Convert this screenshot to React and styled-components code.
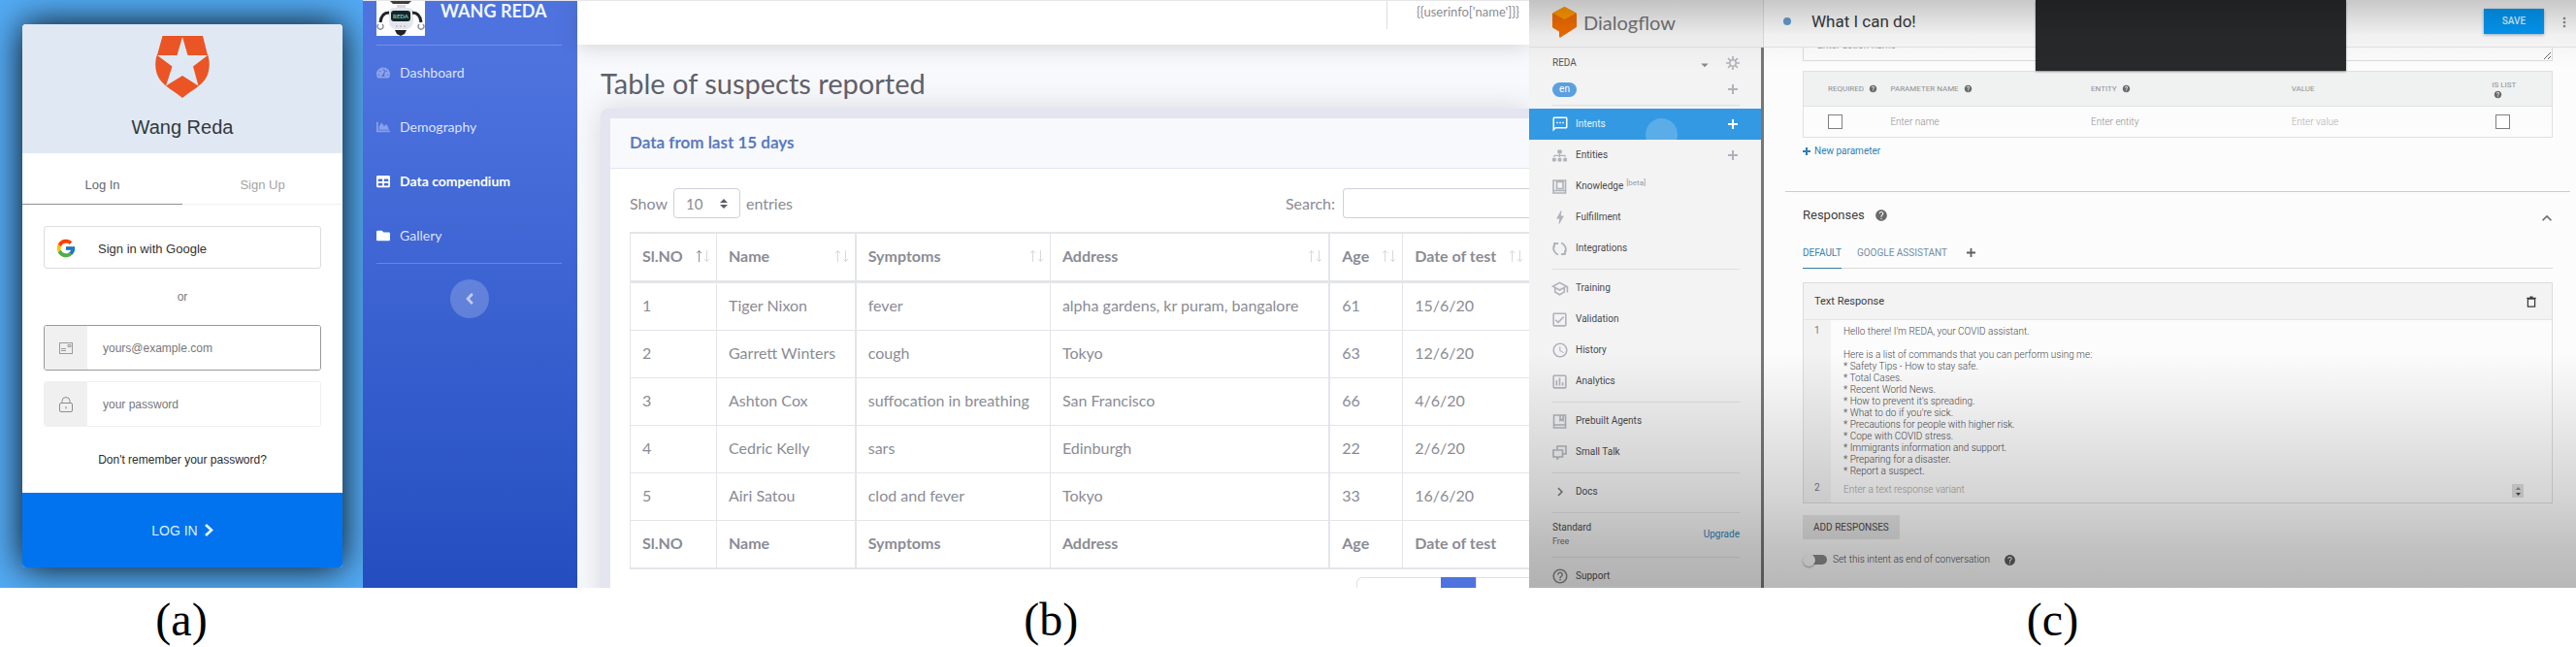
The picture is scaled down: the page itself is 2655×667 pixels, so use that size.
import React from "react";
import styled, { createGlobalStyle, css } from "styled-components";
import { FcGoogle } from "react-icons/fc";
import { FaTachometerAlt, FaChartArea, FaTable, FaFolder, FaAngleLeft, FaSitemap } from "react-icons/fa";
import {
  MdHelp, MdHelpOutline, MdBolt, MdOutlineSchool, MdOutlineCheckBox, MdOutlineAssessment,
  MdSchedule, MdArrowDropDown, MdChevronRight, MdMoreVert, MdExpandLess, MdOutlineSms,
} from "react-icons/md";

const GlobalStyle = createGlobalStyle`
  * { box-sizing: border-box; }
  body { margin: 0; background: #fff; }
  button, input, select, textarea { font: inherit; color: inherit; margin: 0; }
  button { padding: 0; border: 0; background: none; cursor: pointer; }
  a { text-decoration: none; color: inherit; }
  svg { display: block; flex: none; }
`;

const Figures = styled.main`
  display: grid;
  grid-template-columns: minmax(0, 374fr) minmax(0, 1202fr) minmax(0, 1079fr);
`;

const Caption = styled.p`
  margin: 0;
  padding-left: ${(p) => (p.$shift ? "18%" : "0")};
  height: 61px;
  text-align: center;
  font: 48px/66px "Liberation Serif", serif;
  color: #000;
`;

/* ---------- (a) login ---------- */

const LoginScreen = styled.section`
  padding: 25px 21px 21px 23px;
  background: #53abf4;
  overflow: hidden;
  font-family: "Liberation Sans", sans-serif;
`;

const LoginCard = styled.form`
  display: flex;
  flex-direction: column;
  background: #fff;
  border-radius: 4px;
  overflow: hidden;
  box-shadow: 0 0 36px rgba(0, 0, 0, 0.95);
`;

const LoginHeader = styled.header`
  display: flex;
  flex-direction: column;
  align-items: center;
  gap: 14px;
  height: 133px;
  padding-top: 12px;
  background: #e0e9f3;
`;

const LoginTitle = styled.h1`
  margin: 0;
  font-size: 20px;
  line-height: 32px;
  font-weight: 400;
  color: #33383d;
`;

const LoginTabs = styled.div`
  display: grid;
  grid-template-columns: 1fr 1fr;
  margin-bottom: 22px;
`;

const LoginTab = styled.button`
  height: 53px;
  padding-top: 12px;
  font-size: 13px;
  color: ${(p) => (p.$active ? "#66696c" : "#a2a4a6")};
  border-bottom: 1px solid ${(p) => (p.$active ? "#8d8f91" : "#efefef")};
`;

const LoginBody = styled.div`
  display: flex;
  flex-direction: column;
  padding: 0 22px;
`;

const GoogleButton = styled.button`
  display: flex;
  align-items: center;
  gap: 22px;
  height: 44px;
  padding: 2px 11px 0;
  border: 1px solid #dcdcdc;
  border-radius: 3px;
  font-size: 13px;
  color: #333;
`;

const OrText = styled.p`
  margin: 0;
  height: 58px;
  line-height: 58px;
  text-align: center;
  font-size: 12px;
  color: #7b7b7b;
`;

const Field = styled.label`
  display: flex;
  height: 47px;
  margin-bottom: 11px;
  border: 1px solid ${(p) => (p.$focus ? "#999" : "#f0f0f0")};
  border-radius: 3px;
  overflow: hidden;
`;

const FieldIcon = styled.span`
  display: grid;
  place-items: center;
  width: 44px;
  background: #f0f0f0;
`;

const FieldInput = styled.input`
  flex: 1;
  min-width: 0;
  padding: 0 16px;
  border: 0;
  outline: 0;
  font-size: 12px;
  &::placeholder { color: #777; opacity: 1; }
`;

const ForgotLink = styled.a`
  padding: 10px 0 19px;
  height: 57px;
  text-align: center;
  font-size: 12px;
  line-height: 26px;
  color: #2c2c2c;
`;

const LoginSubmit = styled.button`
  display: flex;
  align-items: center;
  justify-content: center;
  gap: 7px;
  height: 77px;
  background: #0273ee;
  color: #d8f1ff;
  font-size: 14px;
`;

function ShieldLogo() {
  return (
    <svg width="58" height="64" viewBox="0 0 58 64" aria-hidden="true">
      <path fill="#eb5424" d="M8.500 0H50L54.500 18C57.500 24 58 36 53 44C48 52 37 57 29 64C21 57 10 52 5 44C0 36 .5 24 3.500 18Z" />
      <path fill="#e0e9f3" d="M29 1L34.500 20H55L40 31.500L45.500 51.500L29 41L12 51.500L18.500 31.500L3 20H23.500Z" />
    </svg>
  );
}

function CardIcon() {
  return (
    <svg width="14" height="12" viewBox="0 0 14 12" fill="none" stroke="#9b9b9b" aria-hidden="true">
      <rect x=".5" y=".5" width="13" height="11" />
      <path d="M2 6.500h5M2 8.500h5M9 2.500h3v2H9z" />
    </svg>
  );
}

function LockIcon() {
  return (
    <svg width="14" height="16" viewBox="0 0 14 16" fill="none" stroke="#8d8d8d" aria-hidden="true">
      <rect x=".5" y="6.500" width="13" height="9" rx="1.500" />
      <path d="M3 6.500V4.500a4 4 0 0 1 8 0v2M7 10v2.500" />
    </svg>
  );
}

function Login() {
  return (
    <LoginScreen>
      <LoginCard onSubmit={(e) => e.preventDefault()}>
        <LoginHeader>
          <ShieldLogo />
          <LoginTitle>Wang Reda</LoginTitle>
        </LoginHeader>
        <LoginTabs>
          <LoginTab type="button" $active>Log In</LoginTab>
          <LoginTab type="button">Sign Up</LoginTab>
        </LoginTabs>
        <LoginBody>
          <GoogleButton type="button"><FcGoogle size={22} />Sign in with Google</GoogleButton>
          <OrText>or</OrText>
          <Field $focus>
            <FieldIcon><CardIcon /></FieldIcon>
            <FieldInput type="email" aria-label="Email" placeholder="yours@example.com" />
          </Field>
          <Field>
            <FieldIcon><LockIcon /></FieldIcon>
            <FieldInput type="password" aria-label="Password" placeholder="your password" />
          </Field>
          <ForgotLink href="#reset">Don't remember your password?</ForgotLink>
        </LoginBody>
        <LoginSubmit type="submit">
          LOG IN
          <svg width="9" height="13" viewBox="0 0 9 13" fill="none" stroke="#e6f6ff" strokeWidth="2.600" aria-hidden="true">
            <path d="M1 1l6 5.500L1 12" />
          </svg>
        </LoginSubmit>
      </LoginCard>
    </LoginScreen>
  );
}

/* ---------- (b) admin table ---------- */

const AdminScreen = styled.section`
  display: flex;
  contain: size;
  overflow: hidden;
  border-top: 1px solid #e6e6ea;
  background: #f8f9fc;
  font: 16px/24px Lato, sans-serif;
  color: #8a8c95;
`;

const AdminNav = styled.nav`
  flex: 0 0 221px;
  display: flex;
  flex-direction: column;
  padding: 0 16px 0 14px;
  background: linear-gradient(180deg, #4e73df 10%, #244ec0 100%);
  color: rgba(255, 255, 255, 0.8);
`;

const AdminBrand = styled.a`
  display: flex;
  align-items: flex-start;
  gap: 16px;
  height: 45px;
  font-size: 18px;
  line-height: 20px;
  font-weight: 700;
  color: #f0f6ff;
`;

const NavRule = styled.hr`
  width: 100%;
  margin: 0;
  border: 0;
  border-top: 1px solid rgba(255, 255, 255, 0.22);
`;

const NavLink = styled.a`
  display: flex;
  align-items: center;
  gap: 10px;
  height: 56px;
  font-size: 14px;
  font-weight: ${(p) => (p.$active ? 700 : 400)};
  color: ${(p) => (p.$active ? "#fff" : "rgba(255,255,255,.82)")};
  svg { color: ${(p) => (p.$bright ? "#fff" : "rgba(255,255,255,.35)")}; }
`;

const CollapseButton = styled.button`
  display: grid;
  place-items: center;
  align-self: center;
  width: 40px;
  height: 40px;
  margin-top: 16px;
  border-radius: 50%;
  background: rgba(255, 255, 255, 0.2);
  color: rgba(255, 255, 255, 0.6);
`;

const AdminMain = styled.div`
  flex: 1;
  min-width: 0;
`;

const TopBar = styled.header`
  display: flex;
  justify-content: flex-end;
  height: 45px;
  padding-right: 10px;
  background: #fff;
  box-shadow: 0 2px 22px rgba(58, 59, 69, 0.2);
  font-size: 13px;
`;

const UserName = styled.span`
  height: 29px;
  padding-left: 30px;
  line-height: 23px;
  border-left: 1px solid #dcdee6;
`;

const AdminContent = styled.div`
  padding-left: 24px;
`;

const PageTitle = styled.h1`
  margin: 0;
  padding: 23px 0 9px;
  font-size: 29px;
  line-height: 34px;
  font-weight: 400;
  color: #5f616a;
`;

const DataCard = styled.article`
  border: 10px solid #e3e5f0;
  border-right: 0;
  border-radius: 8px 0 0 0;
  background: #fff;
  box-shadow: 0 0 28px rgba(58, 59, 69, 0.18);
`;

const CardTitle = styled.h2`
  margin: 0;
  height: 52px;
  padding-left: 20px;
  background: #f8f9fc;
  border-bottom: 1px solid #e3e6f0;
  font-size: 17px;
  line-height: 50px;
  font-weight: 700;
  color: #5a7ac0;
`;

const CardBody = styled.div`
  padding: 20px 0 0 20px;
`;

const TableTools = styled.div`
  display: flex;
  justify-content: space-between;
  margin-bottom: 14px;
`;

const ToolLabel = styled.label`
  display: flex;
  align-items: center;
  gap: ${(p) => p.$gap};
`;

const SelectWrap = styled.span`
  display: flex;
  align-items: center;
  position: relative;
  svg { position: absolute; right: 13px; pointer-events: none; }
`;

const LengthSelect = styled.select`
  appearance: none;
  width: 69px;
  height: 31px;
  padding: 0 12px;
  border: 1px solid #cfd1da;
  border-radius: 4px;
  background: #fff;
  font-size: 15px;
`;

const SearchInput = styled.input`
  width: 192px;
  height: 31px;
  border: 1px solid #cfd1da;
  border-right: 0;
  border-radius: 4px 0 0 4px;
`;

const SuspectTable = styled.table`
  width: 100%;
  table-layout: fixed;
  border-collapse: separate;
  border-spacing: 0;
  border-top: 2px solid #e3e5ea;
`;

const Col = styled.col`
  width: ${(p) => p.$w};
`;

const cell = css`
  padding: 0 6px 2px 12px;
  text-align: left;
  white-space: nowrap;
  border-left: ${(p) => (p.$thick ? 2 : 1)}px solid #e3e5ea;
`;

const HeadCell = styled.th`
  ${cell}
  height: 51px;
  border-bottom: 3px solid #e3e5ea;
`;

const HeadInner = styled.span`
  display: flex;
  align-items: center;
  justify-content: space-between;
`;

const BodyCell = styled.td`
  ${cell}
  height: 49px;
  border-bottom: 1px solid #e3e5ea;
`;

const FootCell = styled.th`
  ${cell}
  height: 50px;
  border-bottom: 2px solid #e3e5ea;
`;

const Pager = styled.div`
  display: grid;
  grid-template-columns: 87px 36px 55px;
  justify-content: end;
  margin-top: 8px;
`;

const PageButton = styled.button`
  height: 38px;
  border: 1px solid ${(p) => (p.$active ? "#4e73df" : "#dddfeb")};
  border-width: 1px 0 1px 1px;
  border-radius: ${(p) => (p.$first ? "6px 0 0 6px" : "0")};
  background: ${(p) => (p.$active ? "#4e73df" : "#fff")};
`;

function RobotPicture() {
  return (
    <svg width="50" height="36" viewBox="0 0 50 36" aria-hidden="true">
      <rect width="50" height="36" fill="#fdfdfd" />
      <path d="M14 0h22l-3 3H17z" fill="#4a3a36" />
      <path d="M21 4h9v3h-9z" fill="#d5d8dd" />
      <path d="M13 12q0-5 6-5h13q6 0 6 5v8q0 8-7 9H20q-7-1-7-9z" fill="#e3e6ec" />
      <rect x="15" y="10" width="20" height="11" rx="3" fill="#15242b" />
      <text x="25" y="18" textAnchor="middle" fontSize="6" fontFamily="Lato, sans-serif" fill="#6fd3b4">REDA</text>
      <path d="M13 12Q5 12 4 22M37 12q8 0 9 10" stroke="#23252b" strokeWidth="3" fill="none" />
      <path d="M6 24a3 3 0 1 1-4 0M48 24a3 3 0 1 1-4 0" stroke="#8a8f99" strokeWidth="1.500" fill="none" />
      <path d="M19 30h12l-2 4-4 2-4-2z" fill="#202228" />
      <path d="M20 26h2M24 26h2M28 26h2" stroke="#a9afb9" />
    </svg>
  );
}

function SortArrows({ up }) {
  return (
    <svg width="15" height="14" viewBox="0 0 15 14" fill="none" aria-hidden="true">
      <path d="M3.500 13V1.500M1 4l2.500-2.500L6 4" stroke={up ? "#8a8c95" : "#d6d8de"} />
      <path d="M11.500 1v11.500M9 10l2.500 2.500L14 10" stroke="#d6d8de" />
    </svg>
  );
}

const NAV = [
  { label: "Dashboard", Icon: FaTachometerAlt },
  { label: "Demography", Icon: FaChartArea },
  { label: "Data compendium", Icon: FaTable, active: true, bright: true },
  { label: "Gallery", Icon: FaFolder, bright: true },
];

const COLUMNS = [
  { label: "Sl.NO", width: "9.600%" },
  { label: "Name", width: "15.400%" },
  { label: "Symptoms", width: "21.700%", thick: true },
  { label: "Address", width: "31%" },
  { label: "Age", width: "8.200%", thick: true },
  { label: "Date of test", width: "14.100%" },
];

const ROWS = [
  ["1", "Tiger Nixon", "fever", "alpha gardens, kr puram, bangalore", "61", "15/6/20"],
  ["2", "Garrett Winters", "cough", "Tokyo", "63", "12/6/20"],
  ["3", "Ashton Cox", "suffocation in breathing", "San Francisco", "66", "4/6/20"],
  ["4", "Cedric Kelly", "sars", "Edinburgh", "22", "2/6/20"],
  ["5", "Airi Satou", "clod and fever", "Tokyo", "33", "16/6/20"],
];

function Admin() {
  return (
    <AdminScreen>
      <AdminNav>
        <AdminBrand href="#home"><RobotPicture />WANG REDA</AdminBrand>
        <NavRule />
        {NAV.map(({ label, Icon, active, bright }) => (
          <NavLink key={label} href="#nav" $active={active} $bright={bright}>
            <Icon size={14} />{label}
          </NavLink>
        ))}
        <NavRule />
        <CollapseButton aria-label="Collapse menu"><FaAngleLeft size={18} /></CollapseButton>
      </AdminNav>
      <AdminMain>
        <TopBar><UserName>{"{{userinfo['name']}}"}</UserName></TopBar>
        <AdminContent>
          <PageTitle>Table of suspects reported</PageTitle>
          <DataCard>
            <CardTitle>Data from last 15 days</CardTitle>
            <CardBody>
              <TableTools>
                <ToolLabel $gap="6px">
                  Show
                  <SelectWrap>
                    <LengthSelect defaultValue="10"><option>10</option><option>25</option></LengthSelect>
                    <svg width="8" height="10" viewBox="0 0 8 10" fill="#5c5e66" aria-hidden="true">
                      <path d="M4 0l4 4H0zM4 10L0 6h8z" />
                    </svg>
                  </SelectWrap>
                  entries
                </ToolLabel>
                <ToolLabel $gap="8px">Search:<SearchInput type="search" /></ToolLabel>
              </TableTools>
              <SuspectTable>
                <colgroup>{COLUMNS.map((c) => <Col key={c.label} $w={c.width} />)}</colgroup>
                <thead>
                  <tr>
                    {COLUMNS.map((c, i) => (
                      <HeadCell key={c.label} $thick={c.thick}>
                        <HeadInner>{c.label}<SortArrows up={i === 0} /></HeadInner>
                      </HeadCell>
                    ))}
                  </tr>
                </thead>
                <tbody>
                  {ROWS.map((r) => (
                    <tr key={r[0]}>
                      {r.map((v, i) => <BodyCell key={i} $thick={COLUMNS[i].thick}>{v}</BodyCell>)}
                    </tr>
                  ))}
                </tbody>
                <tfoot>
                  <tr>{COLUMNS.map((c) => <FootCell key={c.label} $thick={c.thick}>{c.label}</FootCell>)}</tr>
                </tfoot>
              </SuspectTable>
              <Pager>
                <PageButton $first aria-label="Previous page" />
                <PageButton $active aria-label="Page 1" />
                <PageButton aria-label="Next page" />
              </Pager>
            </CardBody>
          </DataCard>
        </AdminContent>
      </AdminMain>
    </AdminScreen>
  );
}

/* ---------- (c) agent console ---------- */

const ConsoleScreen = styled.section`
  display: flex;
  contain: size;
  position: relative;
  overflow: hidden;
  background: #fcfcfc;
  font: 10px/12px Roboto, sans-serif;
  color: #4a4b50;
  &::after {
    content: "";
    position: absolute;
    inset: 0;
    pointer-events: none;
    background:
      linear-gradient(180deg, rgba(0, 0, 0, 0.2), rgba(0, 0, 0, 0.04) 36px, transparent 70px),
      linear-gradient(180deg, transparent 60%, rgba(0, 0, 0, 0.16) 85%, rgba(0, 0, 0, 0.23) 93%, rgba(0, 0, 0, 0.27));
  }
`;

const AgentNav = styled.nav`
  flex: 0 0 242px;
  display: flex;
  flex-direction: column;
  background: #f3f3f3;
`;

const AgentBrand = styled.a`
  flex: none;
  display: flex;
  align-items: center;
  gap: 7px;
  height: 49px;
  padding: 0 0 3px 24px;
  border-bottom: 1px solid #e2e2e2;
  border-right: 1px solid #dcdcdc;
  font: 20px/24px Lato, sans-serif;
  color: #747474;
`;

const AgentMenu = styled.div`
  flex: 1;
  border-right: 3px solid #777;
`;

const AgentRow = styled.div`
  display: flex;
  align-items: center;
  height: ${(p) => p.$h};
  padding: 0 22px 0 24px;
  color: #b0b2b8;
`;

const AgentName = styled.span`
  flex: 1;
  color: #55565b;
`;

const Language = styled.span`
  width: 25px;
  height: 15px;
  margin-right: auto;
  border-radius: 8px;
  background: #5c9fdf;
  color: #fff;
  line-height: 14px;
  text-align: center;
`;

const IconButton = styled.button`
  display: grid;
  place-items: center;
  width: 14px;
  height: 14px;
  margin-left: ${(p) => p.$gap || "0"};
`;

const MenuRule = styled.hr`
  margin: 5px 22px 3px 24px;
  border: 0;
  border-top: 1px solid #dfdfdf;
`;

const MenuItem = styled.a`
  display: flex;
  align-items: center;
  gap: 9px;
  position: relative;
  overflow: hidden;
  height: 32px;
  padding: 0 22px 0 24px;
  color: ${(p) => (p.$active ? "#e8f4ff" : "#4a4b50")};
  background: ${(p) => (p.$active ? "#3399e2" : "none")};
  svg { color: ${(p) => (p.$active ? "#fff" : "#b0b2ba")}; }
`;

const Ripple = styled.span`
  position: absolute;
  left: 50%;
  top: 10px;
  width: 33px;
  height: 33px;
  border-radius: 50%;
  background: rgba(255, 255, 255, 0.2);
`;

const IconSlot = styled.span`
  display: flex;
  justify-content: center;
  width: 15px;
`;

const MenuLabel = styled.span`
  flex: 1;
`;

const Beta = styled.sup`
  margin-left: 3px;
  font-size: 8px;
  line-height: 8px;
  color: #9597a8;
`;

const Plan = styled.div`
  display: flex;
  align-items: center;
  justify-content: space-between;
  height: 37px;
  padding: 0 22px 0 24px;
  line-height: 15px;
`;

const PlanNote = styled.div`
  font-size: 9px;
  color: #707175;
`;

const BlueLink = styled.a`
  color: #2f80b8;
`;

const ConsoleMain = styled.div`
  flex: 1;
  min-width: 0;
`;

const ConsoleHeader = styled.header`
  display: flex;
  align-items: center;
  height: 49px;
  padding: 0 6px 5px 20px;
  border-bottom: 1px solid #e4e4e4;
  background: #fafafa;
`;

const StatusDot = styled.span`
  width: 8px;
  height: 8px;
  margin-right: 21px;
  border-radius: 50%;
  background: #639bcd;
`;

const IntentTitle = styled.h1`
  flex: 1;
  margin: 0;
  font-size: 17px;
  line-height: 24px;
  font-weight: 400;
  color: #36373a;
`;

const SaveButton = styled.button`
  width: 62px;
  height: 26px;
  margin-right: 13px;
  background: #0397f3;
  box-shadow: 0 1px 3px rgba(0, 60, 110, 0.4);
  font-weight: 500;
  color: #d8f1ff;
`;

const Blackout = styled.div`
  position: absolute;
  left: 48.400%;
  top: 0;
  width: 29.600%;
  height: 73px;
  background: #28292b;
  box-shadow: 0 1px 2px rgba(0, 0, 0, 0.4);
`;

const Section = styled.section`
  padding: 0 24px 0 40px;
`;

const ActionClip = styled.div`
  display: flex;
  align-items: flex-end;
  height: 14px;
  margin-bottom: 10px;
  overflow: hidden;
`;

const ActionInput = styled.textarea`
  flex: none;
  width: 100%;
  height: 40px;
  padding: 17px 14px 0;
  border: 1px solid #dcdcdc;
  background: none;
  resize: vertical;
  &::placeholder { color: #999; opacity: 1; }
`;

const ParamTable = styled.table`
  width: 100%;
  table-layout: fixed;
  border-collapse: separate;
  border-spacing: 0;
  border: 1px solid #e0e0e0;
`;

const ParamHead = styled.th`
  height: 36px;
  padding: 0 0 0 ${(p) => (p.$first ? 25 : 0)}px;
  background: #f0f1f1;
  border-bottom: 1px solid #e2e2e2;
  text-align: left;
  font-size: 8px;
  line-height: 11px;
  font-weight: 400;
  color: #8f9092;
`;

const HeadLabel = styled.span`
  display: flex;
  flex-wrap: wrap;
  align-items: center;
  gap: 0 5px;
  svg { color: #6a6a6a; }
`;

const StackedLabel = styled.span`
  display: grid;
  justify-content: start;
  svg { margin-left: 2px; color: #6a6a6a; }
`;

const ParamCell = styled.td`
  height: 31px;
  padding: 0 0 0 ${(p) => (p.$first ? 25 : p.$last ? 4 : 0)}px;
`;

const ParamInput = styled.input`
  display: block;
  width: 100%;
  padding: 0;
  border: 0;
  background: none;
  font-weight: 300;
  &::placeholder { color: ${(p) => (p.$faint ? "#b0b0b0" : "#8f8f8f")}; opacity: 1; }
`;

const TickBox = styled.input`
  appearance: none;
  display: block;
  width: 15px;
  height: 15px;
  border: 1px solid #808080;
  background: #fff;
`;

const NewParameter = styled.button`
  display: flex;
  align-items: center;
  gap: 4px;
  height: 28px;
  color: #2f80b8;
`;

const SectionRule = styled.hr`
  margin: 27px 6px 0 22px;
  border: 0;
  border-top: 1px solid #cdcdcd;
`;

const SectionHead = styled.div`
  display: flex;
  align-items: center;
  gap: 10px;
  height: 47px;
  svg { color: #6a6a6a; }
`;

const SectionTitle = styled.h2`
  margin: 0;
  font-size: 13px;
  line-height: 16px;
  font-weight: 400;
  color: #3c3d40;
`;

const FoldButton = styled.button`
  display: grid;
  place-items: center;
  width: 20px;
  height: 20px;
  margin: 6px -4px 0 auto;
`;

const ResponseTabs = styled.div`
  display: flex;
  gap: 16px;
  height: 32px;
  margin-bottom: 14px;
  border-bottom: 1px solid #d9d9d9;
`;

const ResponseTab = styled.button`
  height: 32px;
  padding: 0 ${(p) => (p.$icon ? 4 : 0)}px;
  color: ${(p) => (p.$icon ? "#5f5f5f" : p.$active ? "#2f86b0" : "#6f8fa6")};
  border-bottom: 1px solid ${(p) => (p.$active ? "#2f7fa0" : "transparent")};
`;

const ResponseCard = styled.div`
  border: 1px solid #dcdcdc;
`;

const ResponseHead = styled.div`
  display: flex;
  align-items: center;
  justify-content: space-between;
  height: 38px;
  padding: 0 15px 0 11px;
  background: #f3f3f3;
  border-bottom: 1px solid #e4e4e4;
  font-size: 11px;
  color: #3c3d40;
`;

const Variant = styled.div`
  display: grid;
  grid-template-columns: 28px 1fr auto;
  align-items: start;
`;

const VariantNumber = styled.span`
  height: 100%;
  padding: ${(p) => (p.$compact ? "4px" : "5px")} 0 0 11px;
  background: #f2f2f3;
  color: #77787c;
`;

const VariantText = styled.textarea`
  display: block;
  width: 100%;
  height: ${(p) => p.$h};
  padding: 6px 0 0 13px;
  border: 0;
  background: none;
  resize: none;
  overflow: hidden;
  font-weight: 300;
  line-height: 12px;
  &::placeholder { color: #a0a0a0; opacity: 1; }
`;

const Stepper = styled.span`
  display: grid;
  place-items: center;
  width: 12px;
  height: 14px;
  margin: 6px 29px 0 0;
  background: #dedede;
`;

const AddResponses = styled.button`
  display: block;
  height: 25px;
  margin: 12px 0 8px;
  padding: 0 11px;
  background: #e6e6e7;
  color: #4a4b50;
`;

const EndRow = styled.label`
  display: flex;
  align-items: center;
  gap: 6px;
  height: 26px;
  svg { margin-left: 8px; color: #5f5f5f; }
`;

const Switch = styled.input`
  appearance: none;
  display: flex;
  align-items: center;
  width: 25px;
  height: 10px;
  border-radius: 5px;
  background: linear-gradient(90deg, transparent 8px, #8b8b8b 8px);
  &::before {
    content: "";
    width: 13px;
    height: 13px;
    border-radius: 50%;
    background: #fafafa;
    box-shadow: 0 1px 2px rgba(0, 0, 0, 0.35);
  }
`;

const EndText = styled.span`
  font-weight: 300;
`;

function AgentLogo() {
  return (
    <svg width="25" height="32" viewBox="0 0 25 32" aria-hidden="true">
      <path fill="#ef6c00" d="M0 7.500Q0 6.500 1 6L11.500 .4q1-.5 2 0L24 6q1 .5 1 1.500V20q0 1-1 1.600L8.500 31.500Q7 32 7 30.500V25.500L1 22Q0 21.500 0 20.500Z" />
      <path fill="#ff9800" d="M.5 6.500L11.500 .4q1-.5 2 0L24.500 6.500 12.500 13Z" />
    </svg>
  );
}

function Glyph({ d, size = 15, width = 2 }) {
  return (
    <svg width={size} height={size} viewBox="0 0 15 15" fill="none" stroke="currentColor" strokeWidth={width} aria-hidden="true">
      <path d={d} />
    </svg>
  );
}

const GearIcon = () => (
  <Glyph d="M7.500 4a3.500 3.500 0 1 0 .01 0M7.500 0v4M7.500 11v4M0 7.500h4M11 7.500h4M2.200 2.200L5 5M10 10l2.800 2.800M12.800 2.200L10 5M5 10l-2.800 2.800" width={1.8} size={14} />
);
const PlusIcon = ({ size = 10, width = 3 }) => <Glyph d="M7.500 0v15M0 7.500h15" size={size} width={width} />;
const BookIcon = () => <Glyph d="M1 1h12.500v13H1zM4.500 2.500h6.500v7H4.500zM1.500 11.500H13" width={1.6} />;
const SyncIcon = () => <Glyph d="M6 2H1.500M2 6V1.500M2.500 2.500Q0 6 2 10Q3 12.500 6 13.500M9 13h4.500M13 9v4.500M12.500 12.500Q15 9 13 5Q12 2.500 9 1.500" width={1.8} />;
const AgentsIcon = () => <Glyph d="M1.500 1h12v13h-12zM2 11h11M8 1.500v5l1.500-1 1.500 1v-5" width={1.6} />;
const TalkIcon = () => <Glyph d="M5 4V1h9v8h-3M1 5h9.500v7H7l-2 2v-2H1z" width={1.6} />;
const TrashIcon = () => <Glyph d="M3 4h9v10H3zM1.500 3h12M5.500 1.500h4" width={1.6} size={12} />;

const MENU = [
  [
    { label: "Intents", icon: <MdOutlineSms size={18} />, active: true, add: true },
    { label: "Entities", icon: <FaSitemap size={15} />, add: true },
    { label: "Knowledge", icon: <BookIcon />, beta: true },
    { label: "Fulfillment", icon: <MdBolt size={18} /> },
    { label: "Integrations", icon: <SyncIcon /> },
  ],
  [
    { label: "Training", icon: <MdOutlineSchool size={19} /> },
    { label: "Validation", icon: <MdOutlineCheckBox size={19} /> },
    { label: "History", icon: <MdSchedule size={18} /> },
    { label: "Analytics", icon: <MdOutlineAssessment size={19} /> },
  ],
  [
    { label: "Prebuilt Agents", icon: <AgentsIcon /> },
    { label: "Small Talk", icon: <TalkIcon /> },
  ],
  [{ label: "Docs", icon: <MdChevronRight size={18} color="#77787c" /> }],
];

const REPLY = `Hello there! I'm REDA, your COVID assistant.

Here is a list of commands that you can perform using me:
* Safety Tips - How to stay safe.
* Total Cases.
* Recent World News.
* How to prevent it's spreading.
* What to do if you're sick.
* Precautions for people with higher risk.
* Cope with COVID stress.
* Immigrants information and support.
* Preparing for a disaster.
* Report a suspect.`;

function ConsoleMenu() {
  return (
    <AgentNav>
      <AgentBrand href="#agent"><AgentLogo />Dialogflow</AgentBrand>
      <AgentMenu>
        <AgentRow $h="32px">
          <AgentName>REDA</AgentName>
          <IconButton aria-label="Choose agent"><MdArrowDropDown size={18} color="#88898c" /></IconButton>
          <IconButton $gap="17px" aria-label="Agent settings"><GearIcon /></IconButton>
        </AgentRow>
        <AgentRow $h="22px">
          <Language>en</Language>
          <IconButton aria-label="Add language"><PlusIcon /></IconButton>
        </AgentRow>
        <MenuRule />
        {MENU.map((group, g) => (
          <React.Fragment key={g}>
            {group.map((m) => (
              <MenuItem key={m.label} href="#menu" $active={m.active}>
                {m.active && <Ripple />}
                <IconSlot>{m.icon}</IconSlot>
                <MenuLabel>{m.label}{m.beta && <Beta>[beta]</Beta>}</MenuLabel>
                {m.add && <IconSlot><PlusIcon /></IconSlot>}
              </MenuItem>
            ))}
            <MenuRule />
          </React.Fragment>
        ))}
        <Plan>
          <div>
            Standard
            <PlanNote>Free</PlanNote>
          </div>
          <BlueLink href="#upgrade">Upgrade</BlueLink>
        </Plan>
        <MenuRule />
        <MenuItem href="#support">
          <IconSlot><MdHelpOutline size={18} color="#85868c" /></IconSlot>
          <MenuLabel>Support</MenuLabel>
        </MenuItem>
      </AgentMenu>
    </AgentNav>
  );
}

function Console() {
  return (
    <ConsoleScreen>
      <ConsoleMenu />
      <ConsoleMain>
        <ConsoleHeader>
          <StatusDot />
          <IntentTitle>What I can do!</IntentTitle>
          <SaveButton>SAVE</SaveButton>
          <IconButton aria-label="More"><MdMoreVert size={16} color="#8a8a8a" /></IconButton>
        </ConsoleHeader>
        <Section>
          <ActionClip><ActionInput aria-label="Action name" placeholder="Enter action name" /></ActionClip>
          <ParamTable>
            <colgroup>
              <Col $w="11.600%" /><Col $w="26.800%" /><Col $w="26.800%" /><Col $w="26.800%" /><Col $w="8%" />
            </colgroup>
            <thead>
              <tr>
                <ParamHead $first><HeadLabel>REQUIRED <MdHelp size={9} /></HeadLabel></ParamHead>
                <ParamHead><HeadLabel>PARAMETER NAME <MdHelp size={9} /></HeadLabel></ParamHead>
                <ParamHead><HeadLabel>ENTITY <MdHelp size={9} /></HeadLabel></ParamHead>
                <ParamHead>VALUE</ParamHead>
                <ParamHead><StackedLabel>IS LIST<MdHelp size={9} /></StackedLabel></ParamHead>
              </tr>
            </thead>
            <tbody>
              <tr>
                <ParamCell $first><TickBox type="checkbox" aria-label="Required" /></ParamCell>
                <ParamCell><ParamInput aria-label="Parameter name" placeholder="Enter name" /></ParamCell>
                <ParamCell><ParamInput aria-label="Entity" placeholder="Enter entity" /></ParamCell>
                <ParamCell><ParamInput $faint aria-label="Value" placeholder="Enter value" /></ParamCell>
                <ParamCell $last><TickBox type="checkbox" aria-label="Is list" /></ParamCell>
              </tr>
            </tbody>
          </ParamTable>
          <NewParameter><PlusIcon size={8} width={4} />New parameter</NewParameter>
        </Section>
        <SectionRule />
        <Section>
          <SectionHead>
            <SectionTitle>Responses</SectionTitle>
            <MdHelp size={14} />
            <FoldButton aria-label="Collapse responses"><MdExpandLess size={20} /></FoldButton>
          </SectionHead>
          <ResponseTabs>
            <ResponseTab $active>DEFAULT</ResponseTab>
            <ResponseTab>GOOGLE ASSISTANT</ResponseTab>
            <ResponseTab $icon aria-label="Add platform"><PlusIcon size={9} /></ResponseTab>
          </ResponseTabs>
          <ResponseCard>
            <ResponseHead>Text Response<TrashIcon /></ResponseHead>
            <Variant>
              <VariantNumber>1</VariantNumber>
              <VariantText $h="163px" aria-label="Response 1" defaultValue={REPLY} />
            </Variant>
            <Variant>
              <VariantNumber $compact>2</VariantNumber>
              <VariantText $h="25px" aria-label="Response 2" placeholder="Enter a text response variant" />
              <Stepper>
                <svg width="5" height="9" viewBox="0 0 5 9" aria-hidden="true">
                  <path d="M2.500 0L5 3H0z" fill="#8a8a8a" />
                  <path d="M2.500 9L0 6h5z" fill="#444" />
                </svg>
              </Stepper>
            </Variant>
          </ResponseCard>
          <AddResponses>ADD RESPONSES</AddResponses>
          <EndRow>
            <Switch type="checkbox" />
            <EndText>Set this intent as end of conversation</EndText>
            <MdHelp size={13} />
          </EndRow>
        </Section>
      </ConsoleMain>
      <Blackout />
    </ConsoleScreen>
  );
}

export default function App() {
  return (
    <>
      <GlobalStyle />
      <Figures>
        <Login />
        <Admin />
        <Console />
        <Caption>(a)</Caption>
        <Caption $shift>(b)</Caption>
        <Caption>(c)</Caption>
      </Figures>
    </>
  );
}
